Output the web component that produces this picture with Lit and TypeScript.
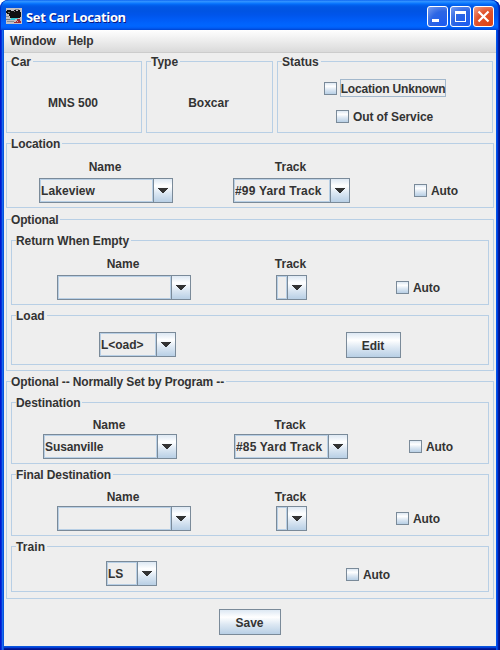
import { LitElement, html, css, svg, nothing } from "lit";
import { customElement, property } from "lit/decorators.js";
import { styleMap } from "lit/directives/style-map.js";

const text = (value: string, spacing = 0) =>
  html`<span class="t" style=${styleMap({ letterSpacing: `${spacing}px` })}>${value}</span>`;

const base = css`
  :host { display: block; box-sizing: border-box; }
  *, *::before { box-sizing: border-box; }
  .t { white-space: nowrap; }
`;

const metal = css`linear-gradient(#dde8f3 0%, #ffffff 30%, #dde8f3 60%, #b8cfe5 100%)`;

@customElement("titled-panel")
class TitledPanel extends LitElement {
  @property() label = "";
  @property({ type: Number }) spacing = 0;
  static styles = [base, css`
    :host { position: relative; border: 1px solid #b8cfe5; }
    .legend {
      position: absolute; top: -7px; left: 4px; height: 14px; line-height: 14px;
      padding: 0 2px 0 0; background: #eee;
    }
  `];
  render() {
    return html`<div class="legend">${text(this.label, this.spacing)}</div><slot></slot>`;
  }
}

@customElement("combo-box")
class ComboBox extends LitElement {
  @property() value = "";
  @property({ type: Number }) spacing = 0;
  static styles = [base, css`
    :host { display: flex; height: 25px; border: 1px solid #7a8a99; }
    .value { flex: 1; min-width: 0; border: 1px solid #b8cfe5; line-height: 22px; overflow: hidden; }
    .arrow {
      flex: none; width: 19px; border-left: 1px solid #7a8a99; background: ${metal};
      display: flex; align-items: center; justify-content: center;
    }
    svg { display: block; }
  `];
  render() {
    return html`<div class="value">${text(this.value, this.spacing)}</div>
      <div class="arrow"><svg width="10" height="5" shape-rendering="crispEdges">
        <path fill="#333" d="M0 0h10v1h-1v1h-1v1h-1v1h-1v1h-2v-1h-1v-1h-1v-1h-1v-1h-1z"/></svg></div>`;
  }
}

@customElement("check-box")
class CheckBox extends LitElement {
  @property() label = "";
  @property({ type: Number }) spacing = 0;
  @property({ type: Boolean }) focused = false;
  static styles = [base, css`
    :host { display: flex; align-items: flex-start; }
    .box { width: 13px; height: 13px; margin-top: 3px; border: 1px solid #7a8a99; background: ${metal}; }
    .label { height: 18px; line-height: 20px; margin-left: 3px; padding: 0 1px; }
    .focused { border: 1px solid #a3b8cc; line-height: 18px; padding: 0; }
  `];
  render() {
    return html`<div class="box"></div>
      <div class="label ${this.focused ? "focused" : ""}">${text(this.label, this.spacing)}</div>`;
  }
}

@customElement("push-button")
class PushButton extends LitElement {
  @property() label = "";
  @property({ type: Number }) spacing = 0;
  static styles = [base, css`
    :host { height: 26px; line-height: 26px; text-align: center; padding-right: 1px; border: 1px solid #7a8a99; background: ${metal}; }
  `];
  render() { return text(this.label, this.spacing); }
}

const field = (cls: string, label: string, value: string, spacing = 0) => html`
  <div class="field ${cls}">
    ${label ? html`<div class="caption">${text(label)}</div>` : nothing}
    <combo-box class="combo" .value=${value} .spacing=${spacing}></combo-box>
  </div>`;

const auto = () => html`<check-box class="auto" label="Auto" .spacing=${-0.1}></check-box>`;

@customElement("app-root")
class AppRoot extends LitElement {
  static styles = [base, css`
    :host {
      height: 650px; width: 500px; background: #fff; color: #333;
      font: bold 12px "Liberation Sans", Arial, sans-serif; cursor: default;
    }
    .window {
      height: 650px; display: flex; flex-direction: column; overflow: hidden;
      border-radius: 8px 8px 0 0; padding: 0 4px 4px;
      background: linear-gradient(90deg, #0019cf 0 1px, #0831d9 1px 2px, #166aee 2px 3px, #0855dd 3px 4px,
        transparent 4px 496px, #0054e9 496px 497px, #003de0 497px 498px, #001ea0 498px 499px, #00138c 499px),
        linear-gradient(0deg, #00138c 0 1px, #001ea0 1px 2px, #0441d8 2px 3px, #0855dd 3px 4px, #0855dd 4px);
    }
    .titlebar {
      flex: none; height: 30px; margin: 0 -4px; padding: 4px 6px 0 6px; display: flex; align-items: center;
      border-radius: 8px 8px 0 0;
      box-shadow: inset 1px 0 #0030c8, inset -1px 0 #0020a8, inset -2px 0 #0038d0;
      background: linear-gradient(#0058ee 0, #3593ff 1px, #288eff 2px, #127dff 3px, #036ffc 4px, #0262ee 5px,
        #0057e5 7px, #0054e3 11px, #0055eb 15px, #005bf5 19px, #0062fc 23px, #0066ff 26px, #005cf5 28px, #0044d0 30px);
    }
    .appicon { display: block; flex: none; margin-top: -2px; }
    .title {
      flex: 1; margin: -1px 0 0 4px; color: #fff; text-shadow: 1px 1px #0a1883; white-space: nowrap;
      font: bold 13px/18px "Open Sans", "Noto Sans", sans-serif;
    }
    .controls { display: flex; gap: 2px; margin-top: -2px; }
    .controls svg { display: block; }
    .menubar {
      flex: none; height: 23px; display: flex; gap: 12px; padding-left: 6px; line-height: 22px;
      border-bottom: 1px solid #ccc; background: linear-gradient(#fff, #dadada);
    }
    .content { flex: 1; background: #eee; padding: 8px 2px 0; display: flex; flex-direction: column; }
    .top { display: flex; gap: 4px; height: 72px; margin-bottom: 10px; }
    .car, .type { display: flex; align-items: center; justify-content: center; padding: 11px 2px 0 0; }
    .car { width: 136px; }
    .type { width: 127px; }
    .status { width: 216px; display: flex; flex-direction: column; align-items: center; gap: 10px; padding-top: 17px; }
    .row { display: flex; align-items: flex-end; }
    .field { display: flex; flex-direction: column; align-items: center; flex: none; }
    .caption { line-height: 14px; height: 18px; margin-right: 2px; }
    .combo { width: 100%; }
    .auto { margin-bottom: 4px; }
    .name { width: 134px; }
    .location { height: 65px; padding: 0 0 4px 32px; }
    .location .track { width: 117px; margin: 0 64px 0 60px; }
    .optional { height: 152px; margin-top: 11px; padding: 20px 4px 0; }
    .empty { padding: 0 0 4px 45px; }
    .empty .track { width: 31px; margin: 0 89px 0 85px; }
    .return { height: 65px; margin-bottom: 10px; }
    .load { height: 50px; padding: 0 0 6px 87px; }
    .load .pick { width: 77px; margin: 0 170px 1px 0; }
    .edit { width: 55px; }
    .program { height: 218px; margin-top: 10px; padding: 20px 4px 0; }
    .program .caption { height: 16px; }
    .destination { height: 62px; margin-bottom: 10px; padding: 0 0 4px 31px; }
    .destination .track { width: 114px; margin: 0 61px 0 57px; }
    .final { height: 62px; margin-bottom: 10px; }
    .train { height: 46px; padding: 0 0 5px 94px; }
    .train .pick { width: 51px; margin-right: 189px; }
    .train .auto { margin-bottom: 3px; }
    .save { width: 62px; margin: 10px 0 0 213px; }
  `];

  private control(id: string, stops: string[], glyph: unknown) {
    return html`<svg width="21" height="21">
      <defs><radialGradient id=${id} cx=".8" cy=".9" r="1.1">
        <stop offset="0" stop-color=${stops[0]}></stop><stop offset=".6" stop-color=${stops[1]}></stop><stop offset="1" stop-color=${stops[2]}></stop>
      </radialGradient></defs>
      <rect x=".5" y=".5" width="20" height="20" rx="2.5" fill="url(#${id})" stroke="#fff"/>${glyph}</svg>`;
  }

  render() {
    const blue = ["#1d5cf0", "#2d66e4", "#6f96ee"];
    return html`<div class="window">
      <div class="titlebar">
        <svg class="appicon" width="16" height="16" shape-rendering="crispEdges">
          <path fill="#c4c0c4" d="M0 0h16v16H0z"/>
          <path fill="#8c8c90" d="M0 8h3v1H0zM1 13h7v1H1zM9 1h4v1H9z"/>
          <path fill="#111" d="M1 2h4v1h3V2h2v1h2V2h2v2h1v5h-1v1H4V8H3V6H1V5H0V3h1z"/>
          <path fill="#777" d="M2 4h2v1H2zM8 3h1v1H8zM0 11h4v1H0z"/>
          <path fill="#38c8d0" d="M5 10h7v1H5zM4 11h5v1H4z"/>
          <path fill="#a02c38" d="M11 11h3v2h1v2H8v-1h2v-1h1z"/>
          <path fill="#c4c0c4" d="M11 13h1v1h-1z"/>
        </svg>
        <div class="title">${text("Set Car Location", -0.35)}</div>
        <div class="controls">
          ${this.control("min", blue, svg`<path fill="#fff" d="M5 13h7v3H5z"/>`)}
          ${this.control("max", blue, svg`<path fill="#fff" fill-rule="evenodd" d="M5 5h11v11H5zM6 8v7h9V8z"/>`)}
          ${this.control("close", ["#e04414", "#e0522c", "#f09a80"], svg`<path stroke="#fff" stroke-width="2.2" d="M5.5 5.5l10 10M15.500 5.500l-10 10"/>`)}
        </div>
      </div>
      <div class="menubar">${text("Window", 0)}${text("Help", -0.1)}</div>
      <div class="content">
        <div class="top">
          <titled-panel class="car" label="Car">${text("MNS 500")}</titled-panel>
          <titled-panel class="type" label="Type">${text("Boxcar")}</titled-panel>
          <titled-panel class="status" label="Status">
            <check-box label="Location Unknown" .spacing=${-0.17} focused></check-box>
            <check-box label="Out of Service" .spacing=${-0.08}></check-box>
          </titled-panel>
        </div>
        <titled-panel class="row location" label="Location" .spacing=${-0.1}>
          ${field("name", "Name", "Lakeview", 0.08)}
          ${field("track", "Track", "#99 Yard Track", 0.2)}
          ${auto()}
        </titled-panel>
        <titled-panel class="optional" label="Optional" .spacing=${-0.15}>
          <titled-panel class="row empty return" label="Return When Empty" .spacing=${-0.1}>
            ${field("name", "Name", "")}${field("track", "Track", "")}${auto()}
          </titled-panel>
          <titled-panel class="row load" label="Load">
            ${field("pick", "", "L<oad>", -0.05)}
            <push-button class="edit" label="Edit"></push-button>
          </titled-panel>
        </titled-panel>
        <titled-panel class="program" label="Optional -- Normally Set by Program --" .spacing=${-0.13}>
          <titled-panel class="row destination" label="Destination" .spacing=${-0.08}>
            ${field("name", "Name", "Susanville", -0.1)}
            ${field("track", "Track", "#85 Yard Track", 0.17)}
            ${auto()}
          </titled-panel>
          <titled-panel class="row empty final" label="Final Destination" .spacing=${-0.1}>
            ${field("name", "Name", "")}${field("track", "Track", "")}${auto()}
          </titled-panel>
          <titled-panel class="row train" label="Train" .spacing=${0.1}>
            ${field("pick", "", "LS")}${auto()}
          </titled-panel>
        </titled-panel>
        <push-button class="save" label="Save"></push-button>
      </div>
    </div>`;
  }
}
